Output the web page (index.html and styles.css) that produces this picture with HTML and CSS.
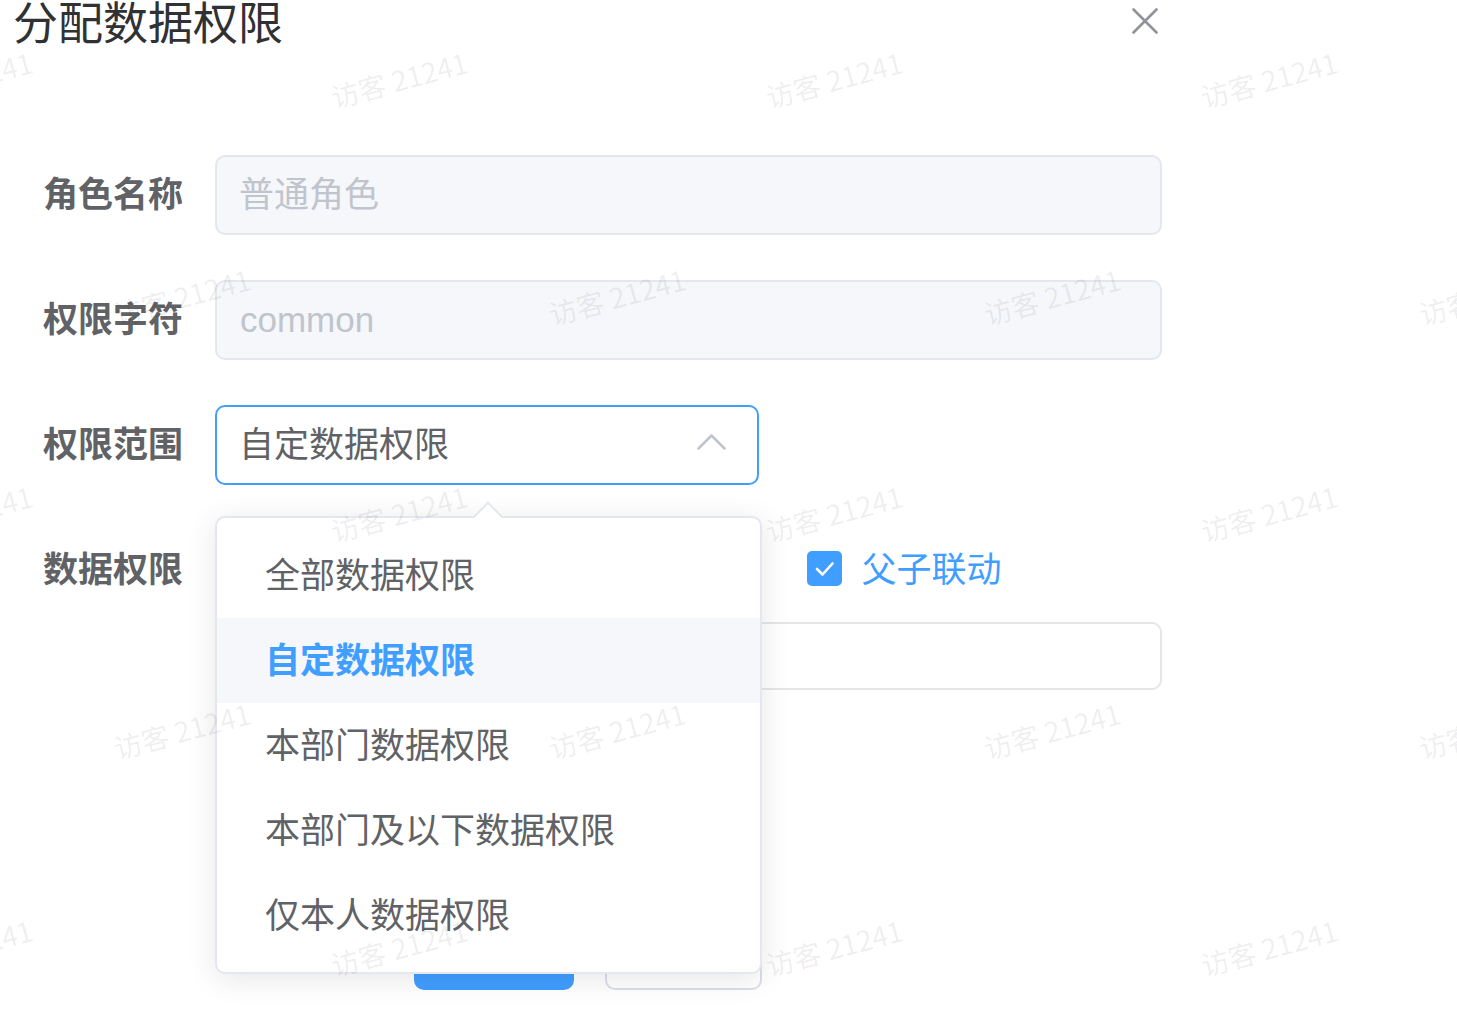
FILE: index.html
```html
<!DOCTYPE html>
<html lang="zh-CN">
<head>
<meta charset="utf-8">
<title>分配数据权限</title>
<link rel="stylesheet" href="styles.css">
</head>
<body>
<div class="dialog">
  <div class="header">
    <span class="title">分配数据权限</span>
  </div>
  <button class="close" type="button" aria-label="关闭">
    <svg width="26" height="26" viewBox="0 0 26 26"><path d="M1.5 1.5 L24.5 24.5 M24.5 1.5 L1.5 24.5" stroke="#909399" stroke-width="2.6" fill="none" stroke-linecap="round"/></svg>
  </button>

  <form class="form">
    <div class="item">
      <label class="label">角色名称</label>
      <div class="content"><div class="input disabled">普通角色</div></div>
    </div>
    <div class="item">
      <label class="label">权限字符</label>
      <div class="content"><div class="input disabled latin">common</div></div>
    </div>
    <div class="item">
      <label class="label">权限范围</label>
      <div class="content select-wrap">
        <div class="input select">
          <span class="select-value">自定数据权限</span>
          <svg class="select-arrow" width="29" height="17" viewBox="0 0 29 17"><polyline points="1.5,15.5 14.5,2.5 27.5,15.5" fill="none" stroke="#C0C4CC" stroke-width="2.6" stroke-linejoin="round" stroke-linecap="round"/></svg>
        </div>
        <div class="dropdown">
          <div class="popper-arrow"></div>
          <ul class="options">
            <li class="option">全部数据权限</li>
            <li class="option selected">自定数据权限</li>
            <li class="option">本部门数据权限</li>
            <li class="option">本部门及以下数据权限</li>
            <li class="option">仅本人数据权限</li>
          </ul>
        </div>
      </div>
    </div>
    <div class="item item-last">
      <label class="label">数据权限</label>
      <div class="content">
        <div class="checks">
          <span class="check checked"><span class="box"><svg width="35" height="35" viewBox="0 0 35 35"><polyline points="10,18 15.5,23.5 25.5,12.5" fill="none" stroke="#fff" stroke-width="2.6" stroke-linecap="round" stroke-linejoin="round"/></svg></span><span class="check-text">展开/折叠</span></span>
          <span class="check"><span class="box"></span><span class="check-text">全选/全不选</span></span>
          <span class="check checked"><span class="box"><svg width="35" height="35" viewBox="0 0 35 35"><polyline points="10,18 15.5,23.5 25.5,12.5" fill="none" stroke="#fff" stroke-width="2.6" stroke-linecap="round" stroke-linejoin="round"/></svg></span><span class="check-text">父子联动</span></span>
        </div>
        <div class="tree"></div>
      </div>
    </div>
  </form>

  <div class="footer">
    <button class="btn primary" type="button">确 定</button>
    <button class="btn" type="button">取 消</button>
  </div>
</div>

<div class="watermarks" aria-hidden="true">
  <div class="wm-row">
    <div class="wm"><span>访客 21241</span></div><div class="wm"><span>访客 21241</span></div><div class="wm"><span>访客 21241</span></div><div class="wm"><span>访客 21241</span></div><div class="wm"><span>访客 21241</span></div>
  </div>
  <div class="wm-row shift">
    <div class="wm"><span>访客 21241</span></div><div class="wm"><span>访客 21241</span></div><div class="wm"><span>访客 21241</span></div><div class="wm"><span>访客 21241</span></div><div class="wm"><span>访客 21241</span></div>
  </div>
  <div class="wm-row">
    <div class="wm"><span>访客 21241</span></div><div class="wm"><span>访客 21241</span></div><div class="wm"><span>访客 21241</span></div><div class="wm"><span>访客 21241</span></div><div class="wm"><span>访客 21241</span></div>
  </div>
  <div class="wm-row shift">
    <div class="wm"><span>访客 21241</span></div><div class="wm"><span>访客 21241</span></div><div class="wm"><span>访客 21241</span></div><div class="wm"><span>访客 21241</span></div><div class="wm"><span>访客 21241</span></div>
  </div>
  <div class="wm-row">
    <div class="wm"><span>访客 21241</span></div><div class="wm"><span>访客 21241</span></div><div class="wm"><span>访客 21241</span></div><div class="wm"><span>访客 21241</span></div><div class="wm"><span>访客 21241</span></div>
  </div>
</div>
</body>
</html>
```

FILE: styles.css
```css
* { box-sizing: border-box; }

html, body {
  margin: 0;
  padding: 0;
  background: #ffffff;
}

body {
  position: relative;
  width: 1457px;
  height: 1023px;
  overflow: hidden;
  font-family: "Liberation Sans", "Noto Sans CJK SC", sans-serif;
  color: #606266;
}

.dialog {
  position: relative;
  width: 1162px;
  padding-left: 13px;
}

.header {
  height: 48px;
}

.title {
  display: block;
  font-size: 45px;
  line-height: 50px;
  color: #303133;
}

.close {
  position: absolute;
  left: 1132px;
  top: 8px;
  width: 26px;
  height: 26px;
  padding: 0;
  border: 0;
  background: transparent;
  display: flex;
}

.form {
  margin: 107px 0 0;
}

.item {
  display: flex;
  margin-bottom: 45px;
}

.item-last {
  margin-bottom: 0;
}

.label {
  flex: 0 0 202px;
  padding-right: 32px;
  text-align: right;
  font-size: 35px;
  line-height: 80px;
  font-weight: 700;
  color: #606266;
}

.content {
  flex: 1;
  min-width: 0;
}

.input {
  height: 80px;
  border: 2px solid #DCDFE6;
  border-radius: 10px;
  padding: 0 22px;
  font-size: 35px;
  line-height: 76px;
  color: #606266;
  background: #fff;
}

.input.latin {
  padding-left: 23px;
}

.input.disabled {
  background: #F5F7FA;
  border-color: #E4E7ED;
  color: #C0C4CC;
}

.select-wrap {
  position: relative;
}

.select {
  width: 544px;
  display: flex;
  align-items: center;
  justify-content: space-between;
  border-color: #409EFF;
  padding-right: 31px;
}

.select-arrow {
  display: block;
  margin-top: -8px;
}

.dropdown {
  position: absolute;
  left: 0;
  top: 111px;
  width: 547px;
  z-index: 5;
  background: #fff;
  border: 2px solid #E4E7ED;
  border-radius: 10px;
  box-shadow: 0 5px 30px 0 rgba(0, 0, 0, 0.1);
}

.popper-arrow {
  position: absolute;
  left: 260px;
  top: -12px;
  width: 22px;
  height: 22px;
  background: #fff;
  border-top: 2px solid #E4E7ED;
  border-left: 2px solid #E4E7ED;
  transform: rotate(45deg);
}

.options {
  position: relative;
  list-style: none;
  margin: 0;
  padding: 15px 0 14px;
}

.option {
  height: 85px;
  line-height: 85px;
  padding: 0 48px;
  font-size: 35px;
  color: #606266;
  white-space: nowrap;
}

.option.selected {
  background: #F5F7FA;
  color: #409EFF;
  font-weight: 700;
}

.checks {
  display: flex;
  align-items: center;
  height: 80px;
}

.check {
  display: flex;
  align-items: center;
  margin-right: 75px;
  font-size: 35px;
  color: #606266;
  white-space: nowrap;
}

.check .box {
  width: 35px;
  height: 35px;
  border: 2px solid #DCDFE6;
  border-radius: 5px;
  background: #fff;
  display: flex;
  align-items: center;
  justify-content: center;
  margin-top: -3px;
}

.check.checked .box {
  background: #409EFF;
  border-color: #409EFF;
}

.check .box svg {
  flex: none;
}

.check-text {
  padding-left: 19px;
  line-height: 80px;
}

.check.checked .check-text {
  color: #409EFF;
}

.tree {
  margin-top: 12px;
  height: 68px;
  border: 2px solid #E5E6E7;
  border-radius: 10px;
  background: #fff;
}

.footer {
  display: flex;
  justify-content: center;
  gap: 31px;
  margin-top: 210px;
}

.btn {
  height: 90px;
  width: 157px;
  border: 2px solid #DCDFE6;
  border-radius: 10px;
  background: #fff;
  color: #606266;
  font-family: "Liberation Sans", "Noto Sans CJK SC", sans-serif;
  font-size: 35px;
  padding: 0;
}

.btn.primary {
  width: 160px;
  background: #409EFF;
  border-color: #409EFF;
  color: #fff;
}

.watermarks {
  position: absolute;
  top: -30px;
  left: -254px;
  right: 0;
  bottom: 0;
  z-index: 10;
  pointer-events: none;
  display: flex;
  flex-direction: column;
}

.wm-row {
  display: flex;
  height: 217px;
  flex: none;
  align-items: center;
}

.wm-row.shift {
  padding-left: 218px;
}

.wm {
  flex: 0 0 435px;
  display: flex;
  justify-content: center;
}

.wm span {
  display: block;
  font-family: "Noto Sans CJK SC", sans-serif;
  font-size: 28px;
  line-height: 30px;
  white-space: nowrap;
  color: rgba(0, 0, 0, 0.075);
  transform: rotate(-15deg);
}
```
